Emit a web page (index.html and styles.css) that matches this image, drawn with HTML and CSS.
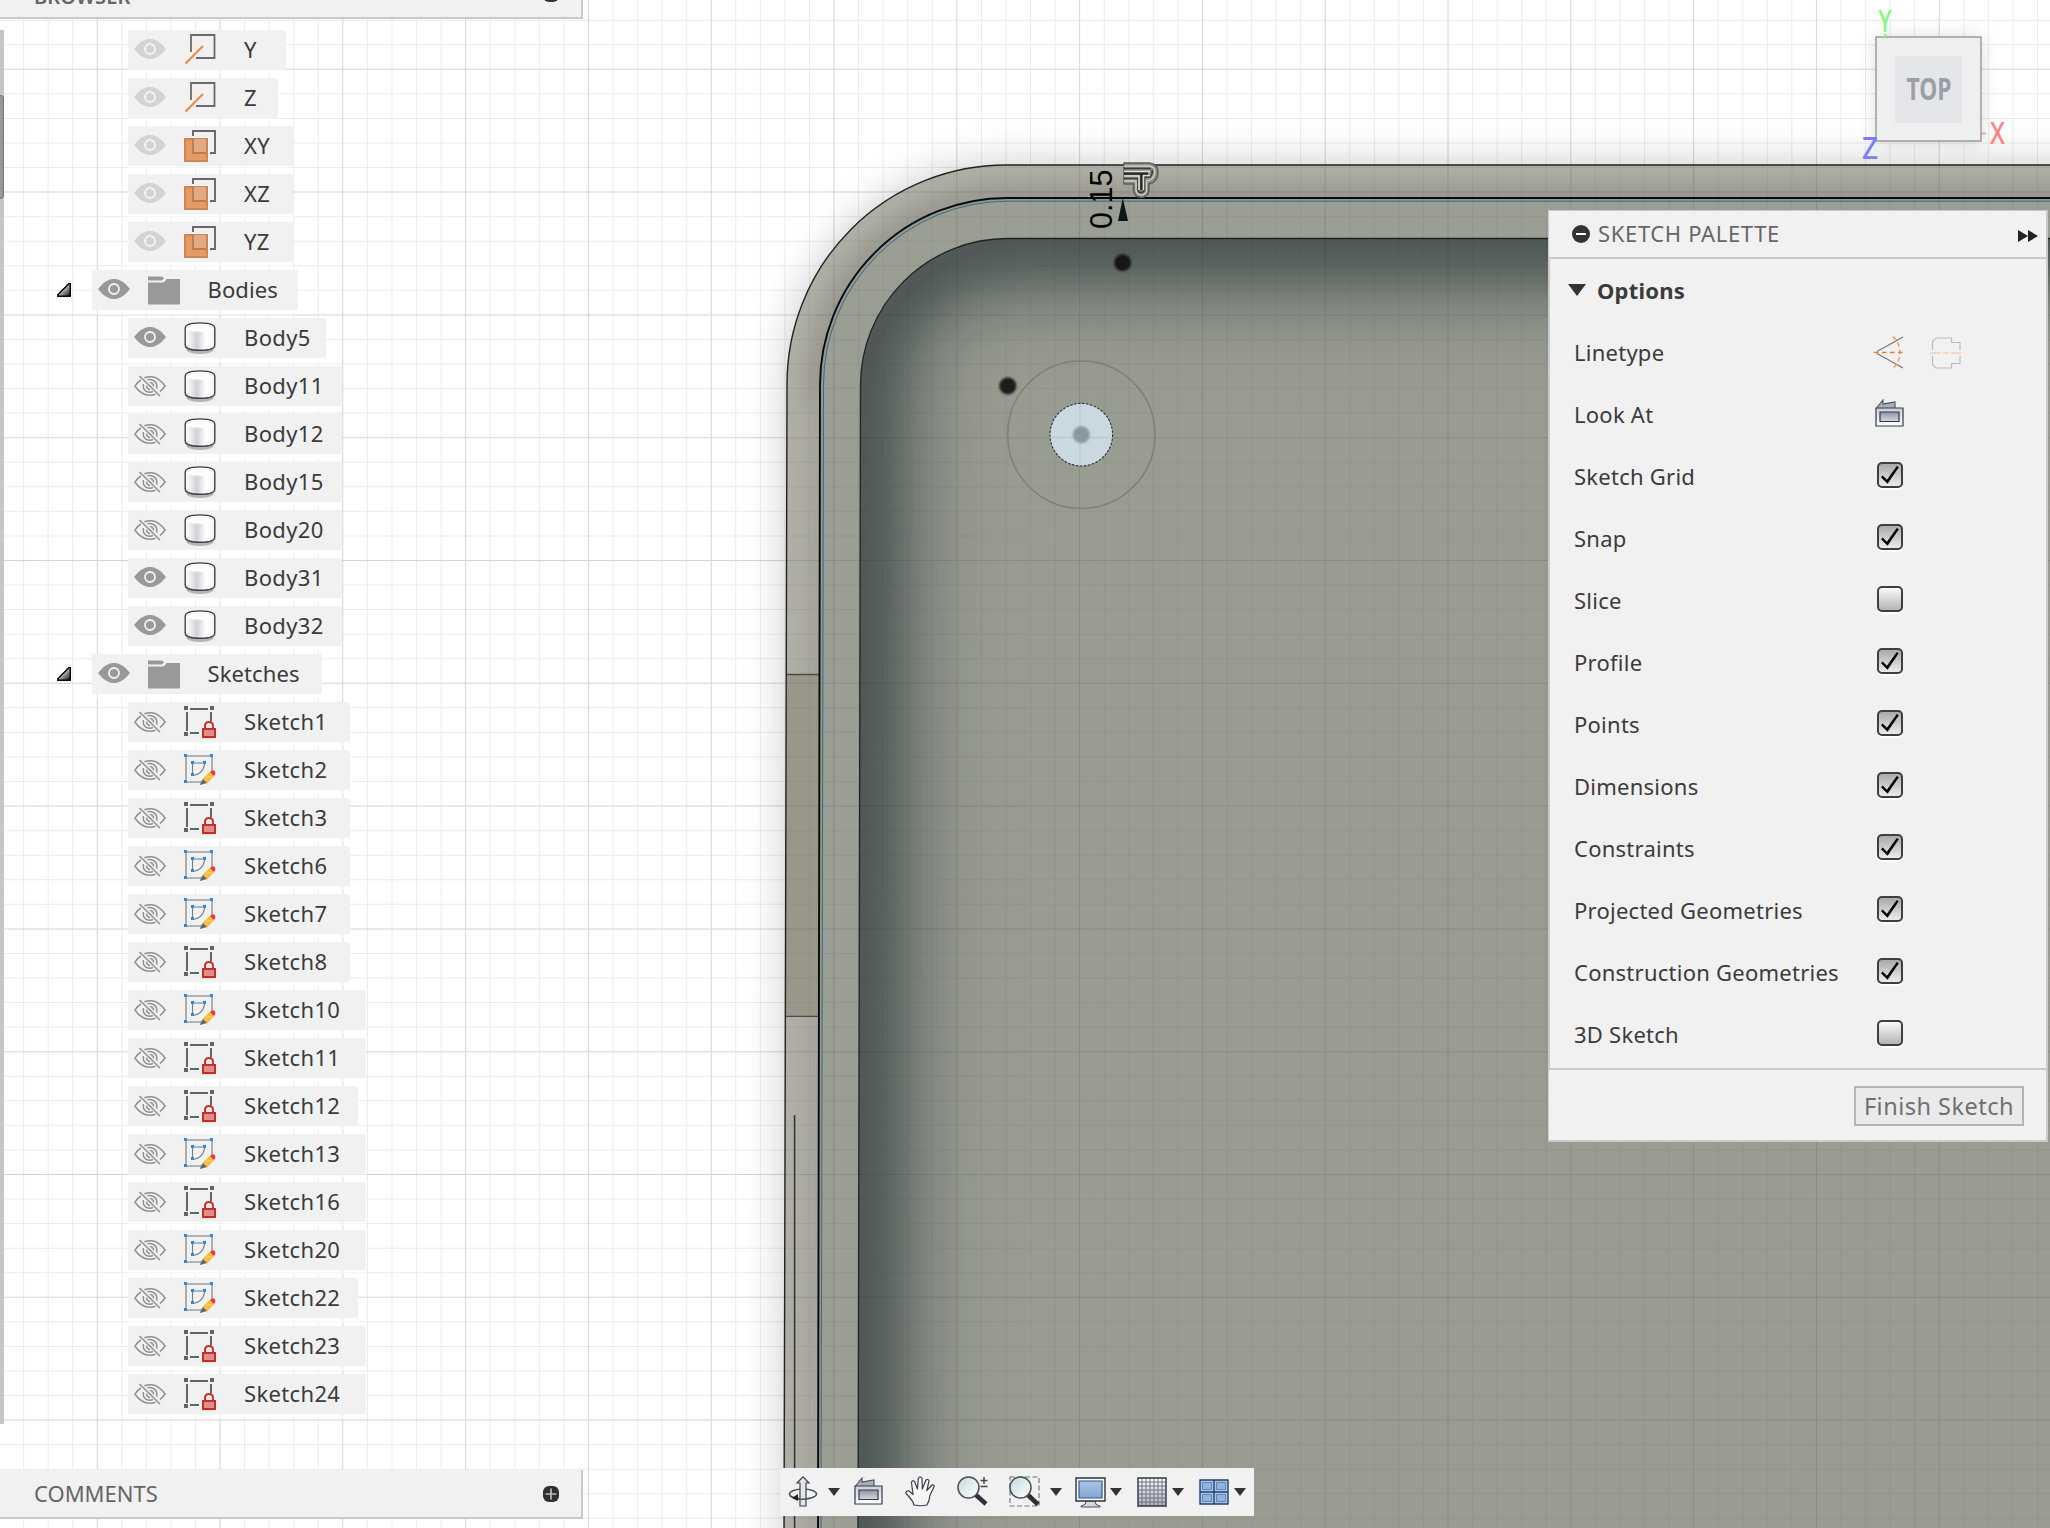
FILE: index.html
```html
<!DOCTYPE html>
<html lang="en">
<head>
<meta charset="utf-8">
<title>Sketch workspace</title>
<link rel="stylesheet" href="styles.css">
</head>
<body>
<svg class="defs" width="0" height="0" aria-hidden="true">
  <defs>
    <linearGradient id="cylFill"><stop offset="0" stop-color="#fff"/><stop offset=".22" stop-color="#e9e9ec"/><stop offset=".38" stop-color="#cfd1d6"/><stop offset=".7" stop-color="#fff"/><stop offset="1" stop-color="#f4f4f6"/></linearGradient>
    <linearGradient id="steel" x2="0" y2="1"><stop offset="0" stop-color="#8d94a4"/><stop offset="1" stop-color="#d5d8df"/></linearGradient>
    <linearGradient id="blueFill" x2="0" y2="1"><stop offset="0" stop-color="#a9c4e4"/><stop offset="1" stop-color="#82a7d6"/></linearGradient>
    <linearGradient id="gridFill" x2="0" y2="1"><stop offset="0" stop-color="#fff"/><stop offset="1" stop-color="#a9b1c4"/></linearGradient>
    <linearGradient id="lens" x2="1" y2="1"><stop offset="0" stop-color="#c4d9dc"/><stop offset="1" stop-color="#fff"/></linearGradient>
    <linearGradient id="frameFill" x2="0" y2="1"><stop offset="0" stop-color="#c9cdd8"/><stop offset="1" stop-color="#fff"/></linearGradient>
    <linearGradient id="triFill" x2="1" y2="1"><stop offset=".3" stop-color="#e6e6e6"/><stop offset="1" stop-color="#111"/></linearGradient>
    <linearGradient id="handFill" x2="0" y2="1"><stop offset="0" stop-color="#fff"/><stop offset="1" stop-color="#f1f1f1"/></linearGradient>
  </defs>
  <symbol id="eye" viewBox="0 0 32 20"><path d="M0 10C6 2.500 11 0 16 0s10 2.500 16 10c-6 7.500-11 10-16 10S6 17.500 0 10z" fill="currentColor"/><circle cx="16" cy="10" r="5" fill="currentColor" stroke="#f4f4f4" stroke-width="1.800"/></symbol>
  <symbol id="eye-off" viewBox="0 0 32 22"><g fill="none" stroke="#909090" stroke-width="1.500"><path d="M10.500 2.800Q16 .8 21.500 2.600Q27 5 31 11Q29 14 26 16.500M21.500 19.200Q16 21.500 10 19Q4.500 16.500 1 11Q3 7.500 7 5M5.500 1l20.500 20M9.500 9q-1 5.500 3 7.500q3.500 1.500 6.500 0M13.500 4.800q5-1.300 8 2.200q2 3 1 6.500M12.500 10.500q0 3.500 3.500 4M16 7.500q3.500 .5 3.500 4"/></g></symbol>
  <symbol id="axis" viewBox="0 0 32 32"><path d="M7 18V1h23.500v23H12" fill="none" stroke="#6b6b6b" stroke-width="1.800"/><path d="M1.500 29.500L19 12" stroke="#ea863f" stroke-width="1.900"/></symbol>
  <symbol id="plane" viewBox="0 0 32 32"><path d="M1 9h22v22H1z" fill="#e79a62" stroke="#cd8653" stroke-width="2"/><path d="M9 9h13v14H9z" fill="#e1ab85"/><path d="M9 9v14h13" fill="none" stroke="#b87b4d" stroke-width="1.800"/><path d="M9 6V1h22v22h-5" fill="none" stroke="#676767" stroke-width="1.900"/></symbol>
  <symbol id="folder" viewBox="0 0 32 28"><path d="M0 0h14l2 2-2 2H0zM0 6h14q3 0 4.500-3.500h13.500V28H0z" fill="#999"/></symbol>
  <symbol id="body" viewBox="0 0 32 32"><ellipse cx="16" cy="27.500" rx="13.500" ry="4.500" fill="#b4b4b6"/><path d="M1.200 6.500C1.200 2.500 7 1 16 1s14.800 1.500 14.800 5.500V23c0 3.500-6 5.300-14.800 5.300S1.200 26.500 1.200 23z" fill="url(#cylFill)" stroke="#41434c" stroke-width="1.400"/><path d="M2 6Q2.500 1.700 16 1.700T30 6Q28 9.800 16 9.800T2 6z" fill="#fdfdfd"/></symbol>
  <symbol id="locked" viewBox="0 0 32 32"><path d="M0 0h4v4H0zM26 0h4v4h-4zM0 26h4v4H0zM6 2h18v2H6zM2 6h2v19H2zM6 26h9v2H6zM26 6h2v9h-2z" fill="#636363"/><path d="M21 23v-3q0-4 4-4t4 4v3" fill="#f1f1f1" stroke="#cc2929" stroke-width="1.900"/><path d="M19 23h12v8H19z" fill="#de8d8d" stroke="#cc2929" stroke-width="2"/></symbol>
  <symbol id="editable" viewBox="0 0 32 32"><path d="M2 2h26v17M2 2v26h15M8.500 9h12c0 7-5 12-12 12.500z" fill="none" stroke="#777" stroke-width="1.100"/><path d="M0 0h3v3H0zM26 0h3v3h-3zM0 26h3v3H0zM7 7h3v3H7zM19 7h3v3h-3zM7 19h3v3H7z" fill="#1d8fe8"/><path d="M19 25l7-7 4 4-7 7z" fill="#fbc04a" stroke="#eaa52e" stroke-width=".6"/><path d="M26 18q3-3 5-.5q1 2-1 4.500z" fill="#f3333a"/><path d="M19 25l4 4-7 2q1-4 3-6z" fill="#666"/></symbol>
  <symbol id="twisty" viewBox="0 0 14 14"><path d="M13.300 .8v12.500H.8v-1.500L11.800 .8z" fill="url(#triFill)" stroke="#000" stroke-width="1.400"/></symbol>
  <symbol id="lookat" viewBox="0 0 29 29"><path d="M1.500 9L8 1v4l12-2v7" fill="#a7b0b8" stroke="#47505b" stroke-width="1.100"/><path d="M1 9h27v18H1z" fill="url(#frameFill)" stroke="#333b48" stroke-width="1.200"/><path d="M5 13h19v9.500H5z" fill="url(#steel)" stroke="#333b48" stroke-width="1.200"/></symbol>
  <symbol id="caret" viewBox="0 0 12 8"><path d="M0 0h12L6 8z" fill="#333"/></symbol>
</svg>

<main class="workspace">
  <svg class="canvas" width="2050" height="1528" viewBox="0 0 2050 1528">
    <defs>
      <filter id="soft" x="-20%" y="-20%" width="140%" height="140%"><feGaussianBlur stdDeviation="22"/></filter>
      <filter id="pocketBlur" filterUnits="userSpaceOnUse" x="600" y="0" width="1700" height="1800"><feGaussianBlur stdDeviation="32"/></filter>
      <filter id="pocketWide" filterUnits="userSpaceOnUse" x="600" y="0" width="1700" height="1800"><feGaussianBlur stdDeviation="42"/></filter>
      <filter id="rimBlur" filterUnits="userSpaceOnUse" x="700" y="80" width="1500" height="1600"><feGaussianBlur stdDeviation="11"/></filter>
      <filter id="dotBlur" x="-30%" y="-30%" width="160%" height="160%"><feGaussianBlur stdDeviation="1.200"/></filter>
      <clipPath id="outerClip"><path d="M784 1540L787 384A219 219 0 0 1 1006 165H2060V1540z"/></clipPath>
      <clipPath id="pocketClip"><path d="M858 1540L860.500 385A147 147 0 0 1 1007.500 238.500H2060V1540z"/></clipPath>
      <g id="gridlines" fill="none">
        <path d="M-1.500 764H2050" stroke-width="1528" stroke-dasharray="1 23.560"/>
        <path d="M1025 -4.900V1528" stroke-width="2050" stroke-dasharray="1 23.560"/>
      </g>
      <g id="gridmajor" fill="none">
        <path d="M-26.100 764H2050" stroke-width="1528" stroke-dasharray="1 121.800"/>
        <path d="M1025 -54V1528" stroke-width="2050" stroke-dasharray="1 121.800"/>
      </g>
    </defs>
    <rect width="2050" height="1528" fill="#fff"/>
    <use href="#gridlines" stroke="#000" opacity=".075"/>
    <use href="#gridmajor" stroke="#000" opacity=".09"/>
    <path d="M784 1640L787 384A219 219 0 0 1 1006 165H2160V1640z" fill="#000" opacity=".21" filter="url(#soft)"/>
    <path d="M784 1540L787 384A219 219 0 0 1 1006 165H2060V1540z" fill="#b0afa6"/>
    <g clip-path="url(#outerClip)">
      <path d="M818 1560L820.500 385" fill="none" stroke="#a19f96" stroke-width="20" filter="url(#rimBlur)"/>
      <path d="M820.500 400V385A187 187 0 0 1 1007.500 198H2080" fill="none" stroke="#96948a" stroke-width="26" filter="url(#rimBlur)"/>
      <path d="M784 674.500H822V1016H784z" fill="#99978a"/>
      <path d="M784 674.500H822M784 1016.300H821" stroke="#4b4b45" stroke-width="1.300"/>
    </g>
    <path d="M818 1540L820.500 385A187 187 0 0 1 1007.500 198H2060V1540z" fill="#9a9e93"/>
    <path d="M858 1540L860.500 385A147 147 0 0 1 1007.500 238.500H2060V1540z" fill="#999c91"/>
    <g clip-path="url(#pocketClip)" fill="none">
      <path d="M858 1700L860.500 385A147 147 0 0 1 1007.500 238.500H2200" stroke="#5f6a68" stroke-width="150" opacity=".5" filter="url(#pocketWide)"/>
      <path d="M858 1700L860.500 385A147 147 0 0 1 1007.500 238.500H2200" stroke="#343f3f" stroke-width="58" opacity=".95" filter="url(#pocketBlur)"/>
    </g>
    <g clip-path="url(#outerClip)"><use href="#gridlines" stroke="#2c3a3a" opacity=".065"/><use href="#gridmajor" stroke="#2c3a3a" opacity=".09"/></g>
    <g fill="none">
      <path d="M784 1540L787 384A219 219 0 0 1 1006 165H2060" stroke="#22231f" stroke-width="1.400"/>
      <path d="M819.500 1540L822 385A185 185 0 0 1 1007.500 199.800H2060" stroke="#8b9a9c" stroke-width="3"/>
      <path d="M818 1540L820 385A187 187 0 0 1 1007.500 198H2060" stroke="#080b0a" stroke-width="1.900"/>
      <path d="M821 1540L823.500 385A184 184 0 0 1 1007.500 201.200H2060" stroke="#4f656b" stroke-width="1"/>
      <path d="M858 1540L860.500 385A147 147 0 0 1 1007.500 238.500H2060" stroke="#1f2422" stroke-width="1.300"/>
      <path d="M794.600 1115V1540" stroke="#32332f" stroke-width="1.500"/>
    </g>
    <circle cx="1081.300" cy="434.700" r="73.700" fill="none" stroke="#7d8079" stroke-width="1.500"/>
    <circle cx="1081.300" cy="434.700" r="31.300" fill="#cad9e0" stroke="#26343a" stroke-width="1.100" stroke-dasharray="2.500 1.500"/>
    <path d="M1080 404v61M1050 437.700h62" stroke="#b5c3c9" stroke-width="1"/>
    <circle cx="1081.300" cy="434.700" r="8.500" fill="#8998a0" filter="url(#dotBlur)"/>
    <circle cx="1122.600" cy="262.700" r="8.500" fill="#171918" filter="url(#dotBlur)"/>
    <circle cx="1007.800" cy="386" r="8.500" fill="#1b1d1b" filter="url(#dotBlur)"/>
    <text class="dimension" transform="translate(1111.800 229) rotate(-90)">0.15</text>
    <path d="M1122.800 198l5.200 23h-10z" fill="#0c171b"/>
    <g fill="none" stroke-linejoin="round">
      <path d="M1124 163H1149Q1158 164 1158 172Q1158 182 1149 184V190Q1148 197.500 1141 197.500Q1134 197 1133.500 190V184H1124z" fill="#8e8d86" stroke="#5d5c57" stroke-width="1.500"/>
      <path d="M1124 166H1149Q1155 167 1155 172Q1154 180 1146.500 181V190Q1146 195 1141 195Q1136.500 195 1136 190V181H1124" stroke="#d0cfc8" stroke-width="1.300"/>
      <path d="M1124 168.500H1151M1151 177H1144.500V190Q1144 192.500 1141 192.500Q1138.500 192.500 1138 190V178.500H1124M1152 170Q1153 174 1150 177" stroke="#3c3c39" stroke-width="1.500"/>
      <path d="M1124 171.500H1150M1124 176H1139V190M1150 175.500H1143.500V190" stroke="#deddd7" stroke-width="1.500"/>
      <path d="M1124 173.700H1148M1141.300 173V190" stroke="#262624" stroke-width="2.200"/>
    </g>
  </svg>

  <section class="viewcube">
    <svg width="170" height="180" viewBox="0 0 170 180">
      <rect x="16" y="37" width="105" height="104" fill="#efefef" stroke="#888" stroke-width="1.200" class="cube-face"/>
      <rect x="35" y="56" width="67" height="67" fill="#e5e6ea"/>
      <path d="M25.500 34v3" stroke="#7bff7b" stroke-width="2.500"/>
      <path d="M121 133.500h5" stroke="#ff8a8a" stroke-width="1.500"/>
      <text class="axis-label" x="18.500" y="31.500" textLength="13" lengthAdjust="spacingAndGlyphs" fill="#7bfb7b">Y</text>
      <text class="axis-label" x="130" y="144" textLength="15" lengthAdjust="spacingAndGlyphs" fill="#ff8383">X</text>
      <text class="axis-label" x="2" y="159" textLength="16" lengthAdjust="spacingAndGlyphs" fill="#7b7bff">Z</text>
      <text class="cube-label" x="46.500" y="100" textLength="45" lengthAdjust="spacingAndGlyphs">TOP</text>
    </svg>
  </section>

  <header class="browser-bar">
    <h2>BROWSER</h2>
    <svg width="16" height="16" viewBox="0 0 16 16"><rect width="16" height="16" rx="6" fill="#333"/></svg>
  </header>

  <div class="scrollbar"><i></i></div>

  <ul class="tree">
    <li class="w-y"><svg class="eye dim"><use href="#eye"/></svg><svg class="kind"><use href="#axis"/></svg><span>Y</span></li>
    <li class="w-z"><svg class="eye dim"><use href="#eye"/></svg><svg class="kind"><use href="#axis"/></svg><span>Z</span></li>
    <li class="w-plane"><svg class="eye dim"><use href="#eye"/></svg><svg class="kind"><use href="#plane"/></svg><span>XY</span></li>
    <li class="w-plane"><svg class="eye dim"><use href="#eye"/></svg><svg class="kind"><use href="#plane"/></svg><span>XZ</span></li>
    <li class="w-plane"><svg class="eye dim"><use href="#eye"/></svg><svg class="kind"><use href="#plane"/></svg><span>YZ</span></li>
    <li class="group w-bodies"><svg class="twisty"><use href="#twisty"/></svg><svg class="eye"><use href="#eye"/></svg><svg class="folder"><use href="#folder"/></svg><span>Bodies</span></li>
    <li class="w-body1"><svg class="eye"><use href="#eye"/></svg><svg class="kind"><use href="#body"/></svg><span>Body5</span></li>
    <li class="w-body2"><svg class="eye-off"><use href="#eye-off"/></svg><svg class="kind"><use href="#body"/></svg><span>Body11</span></li>
    <li class="w-body2"><svg class="eye-off"><use href="#eye-off"/></svg><svg class="kind"><use href="#body"/></svg><span>Body12</span></li>
    <li class="w-body2"><svg class="eye-off"><use href="#eye-off"/></svg><svg class="kind"><use href="#body"/></svg><span>Body15</span></li>
    <li class="w-body2"><svg class="eye-off"><use href="#eye-off"/></svg><svg class="kind"><use href="#body"/></svg><span>Body20</span></li>
    <li class="w-body2"><svg class="eye"><use href="#eye"/></svg><svg class="kind"><use href="#body"/></svg><span>Body31</span></li>
    <li class="w-body2"><svg class="eye"><use href="#eye"/></svg><svg class="kind"><use href="#body"/></svg><span>Body32</span></li>
    <li class="group w-sketches"><svg class="twisty"><use href="#twisty"/></svg><svg class="eye"><use href="#eye"/></svg><svg class="folder"><use href="#folder"/></svg><span>Sketches</span></li>
    <li class="w-sk1"><svg class="eye-off"><use href="#eye-off"/></svg><svg class="kind"><use href="#locked"/></svg><span>Sketch1</span></li>
    <li class="w-sk1"><svg class="eye-off"><use href="#eye-off"/></svg><svg class="kind"><use href="#editable"/></svg><span>Sketch2</span></li>
    <li class="w-sk1"><svg class="eye-off"><use href="#eye-off"/></svg><svg class="kind"><use href="#locked"/></svg><span>Sketch3</span></li>
    <li class="w-sk1"><svg class="eye-off"><use href="#eye-off"/></svg><svg class="kind"><use href="#editable"/></svg><span>Sketch6</span></li>
    <li class="w-sk1"><svg class="eye-off"><use href="#eye-off"/></svg><svg class="kind"><use href="#editable"/></svg><span>Sketch7</span></li>
    <li class="w-sk1"><svg class="eye-off"><use href="#eye-off"/></svg><svg class="kind"><use href="#locked"/></svg><span>Sketch8</span></li>
    <li class="w-sk2"><svg class="eye-off"><use href="#eye-off"/></svg><svg class="kind"><use href="#editable"/></svg><span>Sketch10</span></li>
    <li class="w-sk2"><svg class="eye-off"><use href="#eye-off"/></svg><svg class="kind"><use href="#locked"/></svg><span>Sketch11</span></li>
    <li class="w-sk2s"><svg class="eye-off"><use href="#eye-off"/></svg><svg class="kind"><use href="#locked"/></svg><span>Sketch12</span></li>
    <li class="w-sk2"><svg class="eye-off"><use href="#eye-off"/></svg><svg class="kind"><use href="#editable"/></svg><span>Sketch13</span></li>
    <li class="w-sk2"><svg class="eye-off"><use href="#eye-off"/></svg><svg class="kind"><use href="#locked"/></svg><span>Sketch16</span></li>
    <li class="w-sk2"><svg class="eye-off"><use href="#eye-off"/></svg><svg class="kind"><use href="#editable"/></svg><span>Sketch20</span></li>
    <li class="w-sk2s"><svg class="eye-off"><use href="#eye-off"/></svg><svg class="kind"><use href="#editable"/></svg><span>Sketch22</span></li>
    <li class="w-sk2"><svg class="eye-off"><use href="#eye-off"/></svg><svg class="kind"><use href="#locked"/></svg><span>Sketch23</span></li>
    <li class="w-sk2"><svg class="eye-off"><use href="#eye-off"/></svg><svg class="kind"><use href="#locked"/></svg><span>Sketch24</span></li>
  </ul>

  <section class="comments-bar">
    <h2>COMMENTS</h2>
    <svg width="16" height="16" viewBox="0 0 16 16"><rect width="16" height="16" rx="6" fill="#2f2f2f"/><path d="M8 2.500v11M2.500 8h11" stroke="#bbb" stroke-width="1.700"/></svg>
  </section>

  <nav class="toolbar">
    <svg class="t-orbit" viewBox="0 0 30 32"><ellipse cx="15" cy="18" rx="13.500" ry="5" fill="none" stroke="#4a505a" stroke-width="1.500"/><path d="M12 30V7H9L15 .8 21 7h-3v23z" fill="#e3e5ea" stroke="#3c414b" stroke-width="1.200"/><path d="M2 20q6 4 16 3" fill="none" stroke="#4a505a" stroke-width="1.500"/><path d="M4 22l6-4v7z" fill="#222"/></svg>
    <svg class="caret"><use href="#caret"/></svg>
    <svg class="t-look"><use href="#lookat"/></svg>
    <svg class="t-hand" viewBox="0 0 30 31"><path d="M9 29Q8 25 5 22L.8 17Q1 14.500 4 15l4 3.500L6.500 6.500Q7 3.500 9.500 5.500L12.500 13 13.300 2.200Q15 -.5 17 2.200L17.300 13 21 4Q23.500 2.500 24 5L21.800 14.500 27 9Q29.500 8.500 29 11L25 19Q24.500 25 22 29Q16 30.500 9 29z" fill="url(#handFill)" stroke="#3a3f48" stroke-width="1.200" stroke-linejoin="round"/></svg>
    <svg class="t-zoom" viewBox="0 0 31 31"><path d="M19 19l10 9" stroke="#2d333d" stroke-width="4.500"/><circle cx="11.500" cy="11.500" r="10.500" fill="url(#lens)" stroke="#4a505a" stroke-width="1.500"/><path d="M23.500 4.500h7M27 1v7M23.500 10.500h7" stroke="#444" stroke-width="1.400"/></svg>
    <svg class="t-window" viewBox="0 0 31 31"><path d="M1 1h29v29H1z" fill="none" stroke="#777" stroke-width="1.200" stroke-dasharray="5 2.500"/><path d="M19 19l10 9.500" stroke="#2f2f2f" stroke-width="4.500"/><circle cx="11.500" cy="11.500" r="10.500" fill="url(#lens)" stroke="#4a505a" stroke-width="1.500"/></svg>
    <svg class="caret"><use href="#caret"/></svg>
    <svg class="t-display" viewBox="0 0 31 31"><path d="M11 24h9l1 3.500 4 1.500v1H6v-1l4-1.500z" fill="#d5d8de" stroke="#4a505a"/><path d="M1 1h29v23H1z" fill="#f6f6f8" stroke="#2f343d" stroke-width="1.400"/><path d="M4 4h23v17H4z" fill="url(#blueFill)" stroke="#345a8e" stroke-width="1.200"/></svg>
    <svg class="caret"><use href="#caret"/></svg>
    <svg class="t-grid" viewBox="0 0 30 30"><path d="M1 1h28v28H1z" fill="url(#gridFill)"/><path d="M5 1v28M9 1v28M13 1v28M17 1v28M21 1v28M25 1v28M1 5h28M1 9h28M1 13h28M1 17h28M1 21h28M1 25h28" stroke="#6f737d" stroke-width="1"/><path d="M1 1h28v28H1z" fill="none" stroke="#33363d" stroke-width="1.400"/></svg>
    <svg class="caret"><use href="#caret"/></svg>
    <svg class="t-views" viewBox="0 0 30 26"><path d="M1 1h28v24H1z" fill="#a8c6e8" stroke="#22406c" stroke-width="1.400"/><path d="M3.500 3.500h9v7h-9zM17.500 3.500h9v7h-9zM3.500 15.500h9v7h-9zM17.500 15.500h9v7h-9z" fill="#91b3dd" stroke="#5f85b8"/><path d="M15 1v24M1 13h28" stroke="#22406c" stroke-width="1.400"/></svg>
    <svg class="caret"><use href="#caret"/></svg>
  </nav>

  <aside class="palette">
    <header>
      <svg width="18" height="18" viewBox="0 0 18 18"><circle cx="9" cy="9" r="9" fill="#333"/><path d="M4 9h10" stroke="#fff" stroke-width="2"/></svg>
      <h2>SKETCH PALETTE</h2>
      <svg class="collapse" width="20" height="12" viewBox="0 0 20 12"><path d="M0 0l10 6-10 6zM10 0l10 6-10 6z" fill="#222"/></svg>
    </header>
    <div class="palette-body">
      <h3><svg width="18" height="12" viewBox="0 0 18 12"><path d="M0 0h18L9 12z" fill="#333"/></svg>Options</h3>
      <div class="option"><span>Linetype</span>
        <svg class="line-a" width="32" height="34" viewBox="0 0 32 34"><path d="M29 1L3 15.500M29 32L3 17.500" stroke="#777" stroke-width="1.200"/><path d="M0 16.500h31" stroke="#ea7c30" stroke-width="1.400" stroke-dasharray="4.500 3.500"/><path d="M19 .5q7 7 7 16t-7 16" fill="none" stroke="#ee9658" stroke-width="1.400" stroke-dasharray="4.500 3"/></svg>
        <svg class="line-b" width="32" height="32" viewBox="0 0 32 32"><path d="M2.500 13V4.500L6 1h15.500v4.500h8.500V13M2.500 18.500v9L6 31h15.500v-4.500h8.500v-8" fill="none" stroke="#bbb" stroke-width="1.200"/><path d="M0 16h32" stroke="#f1bd98" stroke-width="1.200" stroke-dasharray="10.500 3 5 2.500"/></svg>
      </div>
      <div class="option"><span>Look At</span><svg class="look"><use href="#lookat"/></svg></div>
      <div class="option"><span>Sketch Grid</span><i class="check on"></i></div>
      <div class="option"><span>Snap</span><i class="check on"></i></div>
      <div class="option"><span>Slice</span><i class="check"></i></div>
      <div class="option"><span>Profile</span><i class="check on"></i></div>
      <div class="option"><span>Points</span><i class="check on"></i></div>
      <div class="option"><span>Dimensions</span><i class="check on"></i></div>
      <div class="option"><span>Constraints</span><i class="check on"></i></div>
      <div class="option"><span>Projected Geometries</span><i class="check on"></i></div>
      <div class="option"><span>Construction Geometries</span><i class="check on"></i></div>
      <div class="option"><span>3D Sketch</span><i class="check"></i></div>
    </div>
    <footer><button type="button">Finish Sketch</button></footer>
  </aside>
</main>
</body>
</html>
```
FILE: styles.css
```css
* { box-sizing: border-box; }
body { margin: 0; background: #fff; color: #3b3b3b; font: 22px/40px "Noto Sans", sans-serif; overflow: hidden; }
h2, h3, ul { margin: 0; padding: 0; font-weight: 400; font-size: 22px; }
.defs { position: absolute; }
.workspace { position: relative; width: 2050px; height: 1528px; overflow: hidden; }
.canvas { display: block; }
.dimension { font: 30.500px "Liberation Sans", sans-serif; fill: #000; }

.viewcube { position: absolute; left: 1860px; top: 0; }
.cube-face { filter: drop-shadow(0 0 9px rgba(0,0,0,.13)); }
.axis-label { font: 500 30px "Noto Sans", sans-serif; }
.cube-label { font: 700 30px "Noto Sans", sans-serif; fill: #9d9fa6; }

.browser-bar, .comments-bar {
  position: absolute; left: 0; width: 583px; display: flex; align-items: center; justify-content: space-between;
  padding: 0 22px 0 34px; background: #f1f1f1; border: solid #c9c9c9; border-width: 0 2px 2px 0; color: #666;
}
.browser-bar { top: -31px; height: 50px; padding-top: 4px; }
.browser-bar h2 { font-size: 20px; font-weight: 600; letter-spacing: .1px; padding-top: 3px; }
.browser-bar svg { margin-top: -2px; }
.comments-bar { top: 1470px; height: 49px; }
.comments-bar h2 { letter-spacing: 0; padding-bottom: 2px; }

.scrollbar { position: absolute; left: 0; top: 30px; width: 4px; height: 1394px; background: #c6c6c9; }
.scrollbar i { display: block; width: 4px; height: 104px; margin-top: 65px; position: absolute; background: #989898; border: 1px solid #777; border-left: 0; border-radius: 0 4px 4px 0; }

.tree { position: absolute; left: 128px; top: 30px; display: flex; flex-direction: column; align-items: flex-start; gap: 8px; list-style: none; }
.tree li { display: flex; align-items: center; height: 40px; padding-left: 6px; background: #f1f1f1; white-space: nowrap; letter-spacing: .35px; box-shadow: 0 5px 0 rgba(255,255,255,.45); }
.tree .group { margin-left: -36px; position: relative; letter-spacing: .1px; }
.tree svg { flex: none; }
.tree span { padding-bottom: 2px; }
.eye, .eye-off { width: 32px; height: 20px; margin: -2px 18px 0 0; color: #999; }
.eye-off { height: 22px; margin-top: 0; }
.eye.dim { color: #d3d3d3; }
.kind { width: 32px; height: 32px; margin: 0 28px 0 0; }
.folder { width: 32px; height: 29px; margin-right: 27.500px; }
.twisty { position: absolute; left: -35px; top: 13px; width: 14px; height: 14px; }
.w-y { width: 158px; } .w-z { width: 150px; } .w-plane { width: 165px; }
.w-bodies { width: 206px; } .w-body1 { width: 198px; } .w-body2 { width: 214px; }
.w-sketches { width: 230px; } .w-sk1 { width: 222px; } .w-sk2 { width: 238px; } .w-sk2s { width: 230px; }

.toolbar { position: absolute; left: 780px; top: 1468px; width: 474px; height: 48px; display: flex; align-items: center; padding-left: 8px; background: #f1f1f1; }
.toolbar svg { flex: none; margin-top: -1px; }
.toolbar .caret { width: 12px; height: 8px; }
.toolbar .t-orbit { width: 30px; height: 32px; margin-right: 10px; }
.toolbar .t-look { width: 29px; height: 29px; margin: -2px 22px 0 14px; }
.toolbar .t-hand { width: 30px; height: 31px; margin-right: 22px; }
.toolbar .t-zoom { width: 31px; height: 31px; margin-right: 21px; }
.toolbar .t-window { width: 31px; height: 31px; margin-right: 10px; }
.toolbar .t-display { width: 31px; height: 31px; margin: 0 4px 0 13px; }
.toolbar .t-grid { width: 30px; height: 30px; margin: 0 5px 0 15px; }
.toolbar .t-views { width: 30px; height: 26px; margin: 0 5px 0 15px; }

.palette { position: absolute; left: 1548px; top: 210px; width: 500px; height: 932px; display: flex; flex-direction: column; background: #f1f1f1; }
.palette header { display: flex; align-items: center; height: 49px; padding: 0 8px 0 23px; border: solid #c9c9c9; border-width: 1px 2px 2px 1px; color: #666; }
.palette header h2 { margin-left: 8px; letter-spacing: .65px; padding-bottom: 2px; }
.palette header .collapse { margin-left: auto; margin-top: 4px; }
.palette-body { flex: 1; padding: 1px 0 0 24px; border: solid #cacaca; border-width: 0 2px; }
.palette h3 { display: flex; align-items: center; height: 62px; margin-left: -6px; padding-bottom: 2px; font-weight: 700; letter-spacing: .2px; }
.palette h3 svg { margin-right: 11px; margin-top: -1px; }
.option { display: flex; align-items: center; height: 62px; letter-spacing: .25px; }
.option span { width: 303px; padding-bottom: 2px; white-space: nowrap; }
.line-a { margin: -1px 24px 0 -3px; }
.look { width: 29px; height: 29px; margin: -4px 0 0 -2px; }
.check { width: 26px; height: 26px; margin-top: -5px; border: 2px solid #3f3f3f; border-radius: 5px; background: linear-gradient(#fafafa, #b4b4b4); box-shadow: 0 2px 1px #fff; }
.check.on { position: relative; background: linear-gradient(#a9a9a9, #ececec); }
.check.on::after { content: ""; position: absolute; inset: 0; background: #000; clip-path: polygon(9% 62%, 17% 54%, 36% 74%, 81% 11%, 90% 17%, 39% 92%); }
.palette footer { height: 74px; display: flex; align-items: center; justify-content: flex-end; padding: 1px 22px 0 0; border: solid #cacaca; border-width: 2px 2px 2px 1px; }
.palette button { width: 170px; height: 40px; padding: 0; font: 23.500px/34px "Noto Sans", sans-serif; letter-spacing: .5px; color: #707070; background: #eaeaea; border: 2px solid #b4b4b4; white-space: nowrap; }
```
